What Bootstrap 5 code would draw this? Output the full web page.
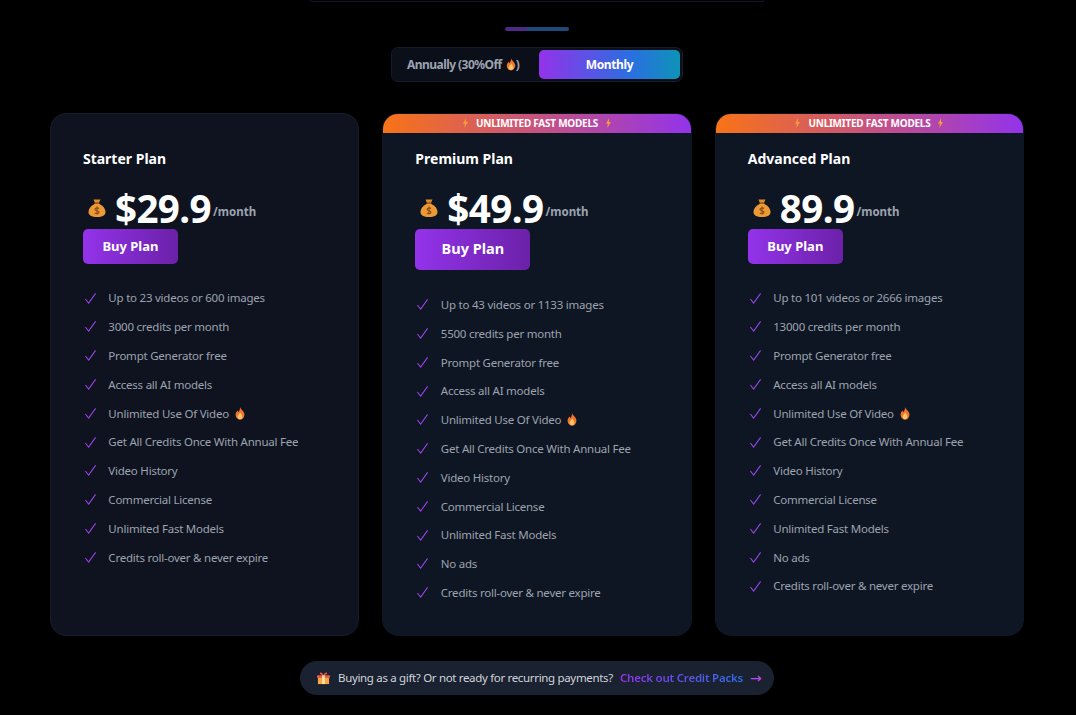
<!DOCTYPE html>
<html lang="en">
<head>
    <meta charset="UTF-8">
    <meta name="viewport" content="width=device-width, initial-scale=1.0">
    <title>Pricing</title>
    <link href="https://cdn.jsdelivr.net/npm/bootstrap@5.3.2/dist/css/bootstrap.min.css" rel="stylesheet">
    <style>
        body { background: #000; font-family: "Noto Sans", "Open Sans", sans-serif; color: #fff; overflow: hidden; }
        .page-wrap { width: 1076px; height: 715px; padding: 0 52px 0 50px; }
        .top-edge { width: 454px; height: 2px; border: 1px solid #111827; border-top: 0; border-radius: 0 0 6px 6px; margin-bottom: 25px; }
        .title-rule { width: 64px; height: 4px; border-radius: 4px; background: linear-gradient(90deg, #4c2a85 0 35%, #1e4a7a 35%); margin-bottom: 16px; }
        .switcher { width: 292px; height: 35px; padding: 2px; background: #0a0f1a; border: 1px solid #141b29; border-radius: 7px; margin-bottom: 31px; }
        .switch-off { width: 145px; padding-left: 13px; font-size: 12px; font-weight: 700; letter-spacing: -.55px; color: #9ca3af; }
        .switch-on { flex: 1; font-size: 12px; font-weight: 700; letter-spacing: -.35px; border-radius: 5px; background: linear-gradient(90deg, #9333ea, #2a6fe0 65%, #0e93b8); }
        .plan-grid { display: grid; grid-template-columns: repeat(3, 309.3px); column-gap: 23.15px; }
        .plan-box { height: 523px; background: #0e131f; border: 1px solid #161c2a; border-radius: 16px; padding: 35px 32px 0; position: relative; overflow: hidden; }
        .plan-box.featured { background: #0f1623; border-color: #0f1623; }
        .ribbon { position: absolute; top: 0; left: 0; right: 0; height: 19px; padding-bottom: 1px; background: linear-gradient(90deg, #f97316, #9333ea); font-size: 10px; font-weight: 700; letter-spacing: -.25px; gap: 7px; }
        .plan-name { font-size: 14px; font-weight: 700; line-height: 20px; margin: 0; }
        .price-line { height: 42px; margin-top: 18px; }
        .amount { font-size: 38.6px; font-weight: 700; line-height: 42px; letter-spacing: -.6px; margin: 0 2px 0 8px; }
        .per { font-size: 11.5px; font-weight: 700; color: #9ca3af; margin-top: 8px; }
        .buy-btn { width: 95px; height: 35px; padding: 0; font-size: 13px; font-weight: 700; color: #fff; border: 0; border-radius: 5px; background: linear-gradient(90deg, #9333ea, #6b21a8); }
        .buy-btn.big { width: 115px; height: 41px; padding-bottom: 2px; font-size: 14.5px; }
        .perks { margin: 19.7px 0 0; }
        .buy-btn.big + .perks { margin-top: 20.3px; }
        .perks li { display: flex; align-items: center; height: 28.8px; font-size: 11.5px; letter-spacing: -.23px; color: #9ca3af; }
        .perks svg.tick { width: 13px; height: 13px; margin: 0 11.45px 0 1px; flex: none; }
        .gift-bar { width: 474px; height: 34px; margin-top: 25px; padding-left: 17px; border-radius: 17px; background: #1a2130; font-size: 11.5px; letter-spacing: -.33px; color: #d1d5db; }
        .pack-link { font-weight: 600; letter-spacing: -.22px; margin-left: -1px; background: linear-gradient(90deg, #9333ea, #2f6fe4); -webkit-background-clip: text; background-clip: text; color: transparent; text-decoration: none; }
        .arrow { font-family: "DejaVu Sans", sans-serif; font-size: 14px; color: #b74ee8; margin-left: -1px; }
    </style>
</head>
<body>
    <!-- emoji drawn by hand, no emoji font here -->
    <svg width="0" height="0" class="position-absolute">
        <symbol id="tick" viewBox="0 0 14 14"><path d="M1.5 7.5 5 12 12.5 1.5" fill="none" stroke="#9b45ec" stroke-width="1.1"/></symbol>
        <symbol id="bag" viewBox="0 0 20 20">
            <path d="M6.5 1.5h7l-1.600 3.400H8z" fill="#e08a2a"/>
            <path d="M7.500 4.600h5v1.300h-5z" fill="#7a4a1c"/>
            <path d="M8 5.800C3.500 8 1.500 11 1.500 14c0 3.500 3 5 8.500 5s8.500-1.500 8.500-5c0-3-2-6-6.500-8.200z" fill="#eb9a35"/>
            <path d="M10 8.500v8M12 10.500c-.8-.8-4-1-4 .8 0 2 4 1 4 3 0 1.700-3 1.600-4.200.7" fill="none" stroke="#8a4b17" stroke-width="1.100"/>
        </symbol>
        <symbol id="fire" viewBox="0 0 16 20">
            <path d="M8 .5c.8 3 5 5 6.500 9 1.300 4.500-1.700 10-6.500 10S.2 14 1.500 9.800C2 8 3.500 7 3.800 5.500c1 .6 1.500 1.500 1.700 2.500C7 6 8.300 3.500 8 .5z" fill="#f0742a"/>
            <path d="M8.200 8c.5 2 3.600 3.500 3.600 6.700 0 2.500-1.700 4-3.800 4s-3.800-1.500-3.800-4c0-2.700 3.400-3.700 4-6.700z" fill="#fbc56b"/>
        </symbol>
        <symbol id="bolt" viewBox="0 0 10 16"><path d="M6 0 1 9h3l-1 7 6-9.500H5.800z" fill="#f59a3c"/></symbol>
        <symbol id="gift" viewBox="0 0 14 14">
            <path d="M1 5.500h12V13H1z" fill="#f4a742"/>
            <path d="M0 3.500h14v2.700H0z" fill="#e9564a"/>
            <path d="M5.500 3.500h3V13h-3z" fill="#f9e0a0"/>
            <path d="M7 3.500C5 3.200 3 2.500 3 1c1.500-1.200 3.300.5 4 2.500 .7-2 2.500-3.700 4-2.500 0 1.500-2 2.200-4 2.500z" fill="#e9564a"/>
        </symbol>
    </svg>

    <div class="page-wrap d-flex flex-column align-items-center">
        <div class="top-edge"></div>
        <div class="title-rule"></div>

        <!-- billing toggle -->
        <div class="switcher d-flex">
            <div class="switch-off d-flex align-items-center">Annually (30%Off<svg width="10" height="13" class="ms-1"><use href="#fire"/></svg>)</div>
            <div class="switch-on d-flex align-items-center justify-content-center">Monthly</div>
        </div>

        <div class="plan-grid">
            <!-- Starter -->
            <div class="plan-box">
                <h5 class="plan-name">Starter Plan</h5>
                <div class="price-line d-flex align-items-center">
                    <svg width="20" height="20" class="ms-1"><use href="#bag"/></svg>
                    <span class="amount">$29.9</span><span class="per">/month</span>
                </div>
                <button class="btn buy-btn">Buy Plan</button>
                <ul class="perks list-unstyled">
                    <li><svg class="tick"><use href="#tick"/></svg>Up to 23 videos or 600 images</li>
                    <li><svg class="tick"><use href="#tick"/></svg>3000 credits per month</li>
                    <li><svg class="tick"><use href="#tick"/></svg>Prompt Generator free</li>
                    <li><svg class="tick"><use href="#tick"/></svg>Access all AI models</li>
                    <li><svg class="tick"><use href="#tick"/></svg>Unlimited Use Of Video<svg width="14" height="13" class="ms-1"><use href="#fire"/></svg></li>
                    <li><svg class="tick"><use href="#tick"/></svg>Get All Credits Once With Annual Fee</li>
                    <li><svg class="tick"><use href="#tick"/></svg>Video History</li>
                    <li><svg class="tick"><use href="#tick"/></svg>Commercial License</li>
                    <li><svg class="tick"><use href="#tick"/></svg>Unlimited Fast Models</li>
                    <li><svg class="tick"><use href="#tick"/></svg>Credits roll-over &amp; never expire</li>
                </ul>
            </div>

            <!-- Premium -->
            <div class="plan-box featured">
                <div class="ribbon d-flex align-items-center justify-content-center"><svg width="7" height="10"><use href="#bolt"/></svg>UNLIMITED FAST MODELS<svg width="7" height="10"><use href="#bolt"/></svg></div>
                <h5 class="plan-name">Premium Plan</h5>
                <div class="price-line d-flex align-items-center">
                    <svg width="20" height="20" class="ms-1"><use href="#bag"/></svg>
                    <span class="amount">$49.9</span><span class="per">/month</span>
                </div>
                <button class="btn buy-btn big">Buy Plan</button>
                <ul class="perks list-unstyled">
                    <li><svg class="tick"><use href="#tick"/></svg>Up to 43 videos or 1133 images</li>
                    <li><svg class="tick"><use href="#tick"/></svg>5500 credits per month</li>
                    <li><svg class="tick"><use href="#tick"/></svg>Prompt Generator free</li>
                    <li><svg class="tick"><use href="#tick"/></svg>Access all AI models</li>
                    <li><svg class="tick"><use href="#tick"/></svg>Unlimited Use Of Video<svg width="14" height="13" class="ms-1"><use href="#fire"/></svg></li>
                    <li><svg class="tick"><use href="#tick"/></svg>Get All Credits Once With Annual Fee</li>
                    <li><svg class="tick"><use href="#tick"/></svg>Video History</li>
                    <li><svg class="tick"><use href="#tick"/></svg>Commercial License</li>
                    <li><svg class="tick"><use href="#tick"/></svg>Unlimited Fast Models</li>
                    <li><svg class="tick"><use href="#tick"/></svg>No ads</li>
                    <li><svg class="tick"><use href="#tick"/></svg>Credits roll-over &amp; never expire</li>
                </ul>
            </div>

            <!-- Advanced -->
            <div class="plan-box featured">
                <div class="ribbon d-flex align-items-center justify-content-center"><svg width="7" height="10"><use href="#bolt"/></svg>UNLIMITED FAST MODELS<svg width="7" height="10"><use href="#bolt"/></svg></div>
                <h5 class="plan-name">Advanced Plan</h5>
                <div class="price-line d-flex align-items-center">
                    <svg width="20" height="20" class="ms-1"><use href="#bag"/></svg>
                    <span class="amount">89.9</span><span class="per">/month</span>
                </div>
                <button class="btn buy-btn">Buy Plan</button>
                <ul class="perks list-unstyled">
                    <li><svg class="tick"><use href="#tick"/></svg>Up to 101 videos or 2666 images</li>
                    <li><svg class="tick"><use href="#tick"/></svg>13000 credits per month</li>
                    <li><svg class="tick"><use href="#tick"/></svg>Prompt Generator free</li>
                    <li><svg class="tick"><use href="#tick"/></svg>Access all AI models</li>
                    <li><svg class="tick"><use href="#tick"/></svg>Unlimited Use Of Video<svg width="14" height="13" class="ms-1"><use href="#fire"/></svg></li>
                    <li><svg class="tick"><use href="#tick"/></svg>Get All Credits Once With Annual Fee</li>
                    <li><svg class="tick"><use href="#tick"/></svg>Video History</li>
                    <li><svg class="tick"><use href="#tick"/></svg>Commercial License</li>
                    <li><svg class="tick"><use href="#tick"/></svg>Unlimited Fast Models</li>
                    <li><svg class="tick"><use href="#tick"/></svg>No ads</li>
                    <li><svg class="tick"><use href="#tick"/></svg>Credits roll-over &amp; never expire</li>
                </ul>
            </div>
        </div>

        <div class="gift-bar d-flex align-items-center gap-2">
            <svg width="13" height="13"><use href="#gift"/></svg>
            <span>Buying as a gift? Or not ready for recurring payments?</span>
            <a href="#" class="pack-link">Check out Credit Packs</a>
            <span class="arrow">→</span>
        </div>
    </div>
    <script src="https://cdn.jsdelivr.net/npm/bootstrap@5.3.2/dist/js/bootstrap.bundle.min.js"></script>
</body>
</html>
